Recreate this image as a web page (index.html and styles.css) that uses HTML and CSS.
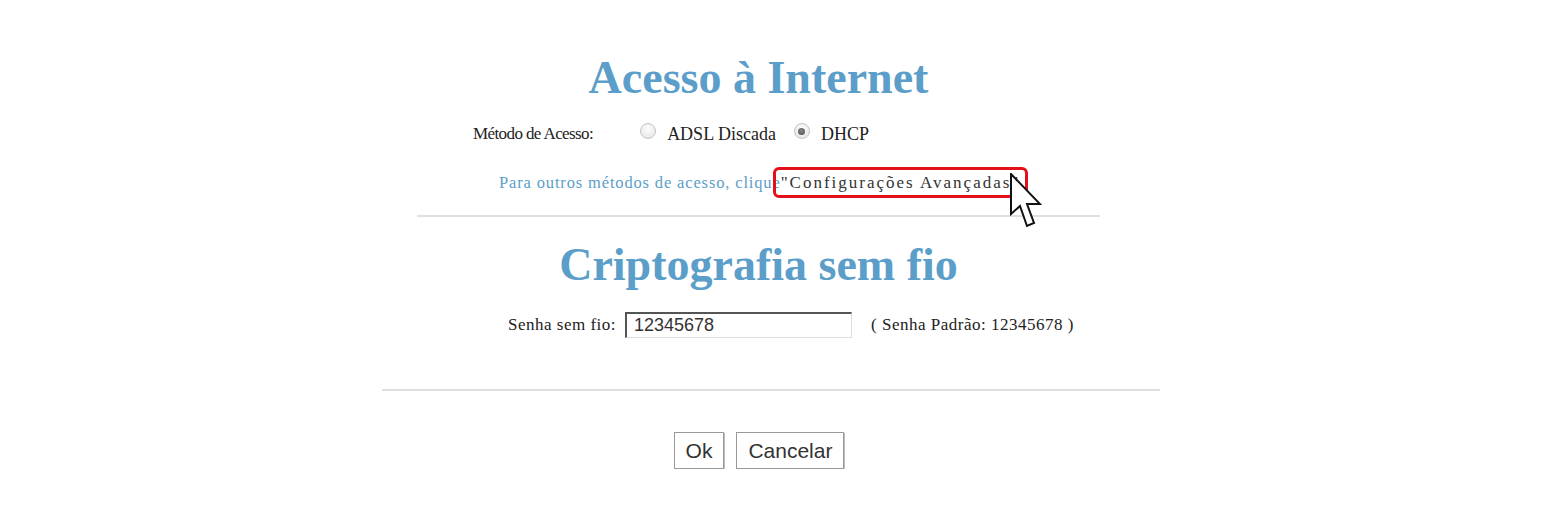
FILE: index.html
```html
<!DOCTYPE html>
<html lang="pt-BR">
<head>
    <meta charset="UTF-8">
    <meta name="viewport" content="width=device-width, initial-scale=1.0">
    <title>Acesso à Internet</title>
    <link rel="stylesheet" href="styles.css">
</head>
<body>

    <div class="page">
        <div class="section">
            <h2 class="title">Acesso à Internet</h2>

            <div class="method-row">
                <span class="label">Método de Acesso:</span>
                <label class="radio"><span class="radio-dot"></span>ADSL Discada</label>
                <label class="radio"><span class="radio-dot checked"></span>DHCP</label>
            </div>

            <p class="hint">Para outros métodos de acesso, clique<span class="advanced">"Configurações Avançadas"<svg class="cursor" width="32" height="56" viewBox="0 0 32 56"><path d="M1 1 L1 41 L10 33 L17 53 L24 50 L17 31 L30 31 Z" fill="#fff" stroke="#111" stroke-width="2" stroke-linejoin="miter"/></svg></span></p>

            <hr class="divider">

            <h2 class="title title-wifi">Criptografia sem fio</h2>
        </div>

        <div class="password-row">
            <span class="label">Senha sem fio:</span>
            <input type="text" class="password" value="12345678">
            <span class="note">( Senha Padrão: 12345678 )</span>
        </div>

        <hr class="divider wide">

        <div class="actions">
            <button class="btn">Ok</button>
            <button class="btn">Cancelar</button>
        </div>
    </div>

</body>
</html>
```

FILE: styles.css
```css
body {
    margin: 0;
    background: #fff;
    font-family: "Liberation Serif", "Times New Roman", serif;
    color: #222;
}
.page {
    width: 784px;
    margin: 0 auto;
    padding: 52px 6px 0 0;
    box-sizing: border-box;
}
.section {
    margin: 0 60px 0 35px;
}
.title {
    margin: 0;
    text-align: center;
    font-size: 46px;
    line-height: 52px;
    font-weight: bold;
    color: #5b9ec9;
}
.method-row {
    display: flex;
    align-items: center;
    height: 20px;
    margin: 20px 0 0 56px;
    font-size: 17px;
}
.method-row .label {
    margin-right: 47px;
    letter-spacing: -0.6px;
}
.radio {
    display: flex;
    align-items: center;
    font-size: 18px;
    margin-right: 18px;
}
.radio-dot {
    width: 14px;
    height: 14px;
    border-radius: 50%;
    border: 1px solid #c4c4c4;
    background: radial-gradient(circle at 50% 35%, #fdfdfd 0, #e2e2e2 100%);
    margin-right: 11px;
    position: relative;
    top: -3px;
}
.radio-dot.checked::after {
    content: "";
    position: absolute;
    left: 3.5px;
    top: 3.5px;
    width: 7px;
    height: 7px;
    border-radius: 50%;
    background: radial-gradient(circle at 50% 40%, #888 0, #4a4a4a 100%);
}
.hint {
    margin: 29px 0 0 82px;
    line-height: 20px;
    font-size: 16.5px;
    letter-spacing: 0.85px;
    color: #5b9ec9;
}
.advanced {
    position: relative;
    color: #333;
    font-size: 17px;
    letter-spacing: 2px;
}
.advanced::after {
    content: "";
    position: absolute;
    left: -8px;
    right: -8px;
    top: -6px;
    bottom: -6px;
    border: 3px solid #e3101a;
    border-radius: 6px;
}
.cursor {
    position: absolute;
    left: calc(100% - 10px);
    top: 0;
    z-index: 2;
}
.divider {
    margin: 22px 0 0;
    border: 0;
    height: 2px;
    background: #e0e0e0;
}
.title-wifi {
    margin-top: 22px;
}
.password-row {
    display: flex;
    align-items: center;
    margin: 21px 0 0 126px;
    font-size: 17px;
    letter-spacing: 0.5px;
}
.password {
    width: 227px;
    height: 26px;
    box-sizing: border-box;
    margin: 0 19px 0 9px;
    padding: 0 7px;
    border: 1px solid #ddd;
    border-top: 2px solid #555;
    border-left: 2px solid #555;
    font-family: "Liberation Sans", Arial, sans-serif;
    font-size: 18px;
    letter-spacing: 0;
    color: #333;
}
.divider.wide {
    margin-top: 51px;
}
.actions {
    display: flex;
    justify-content: center;
    gap: 12px;
    margin: 41px 0 0 -24px;
}
.btn {
    height: 37px;
    padding: 0 11px;
    background: #fff;
    border: 1px solid #999;
    box-shadow: 1px 1px 0 #bbb;
    font-family: "Liberation Sans", Arial, sans-serif;
    font-size: 21px;
    color: #333;
}
```
